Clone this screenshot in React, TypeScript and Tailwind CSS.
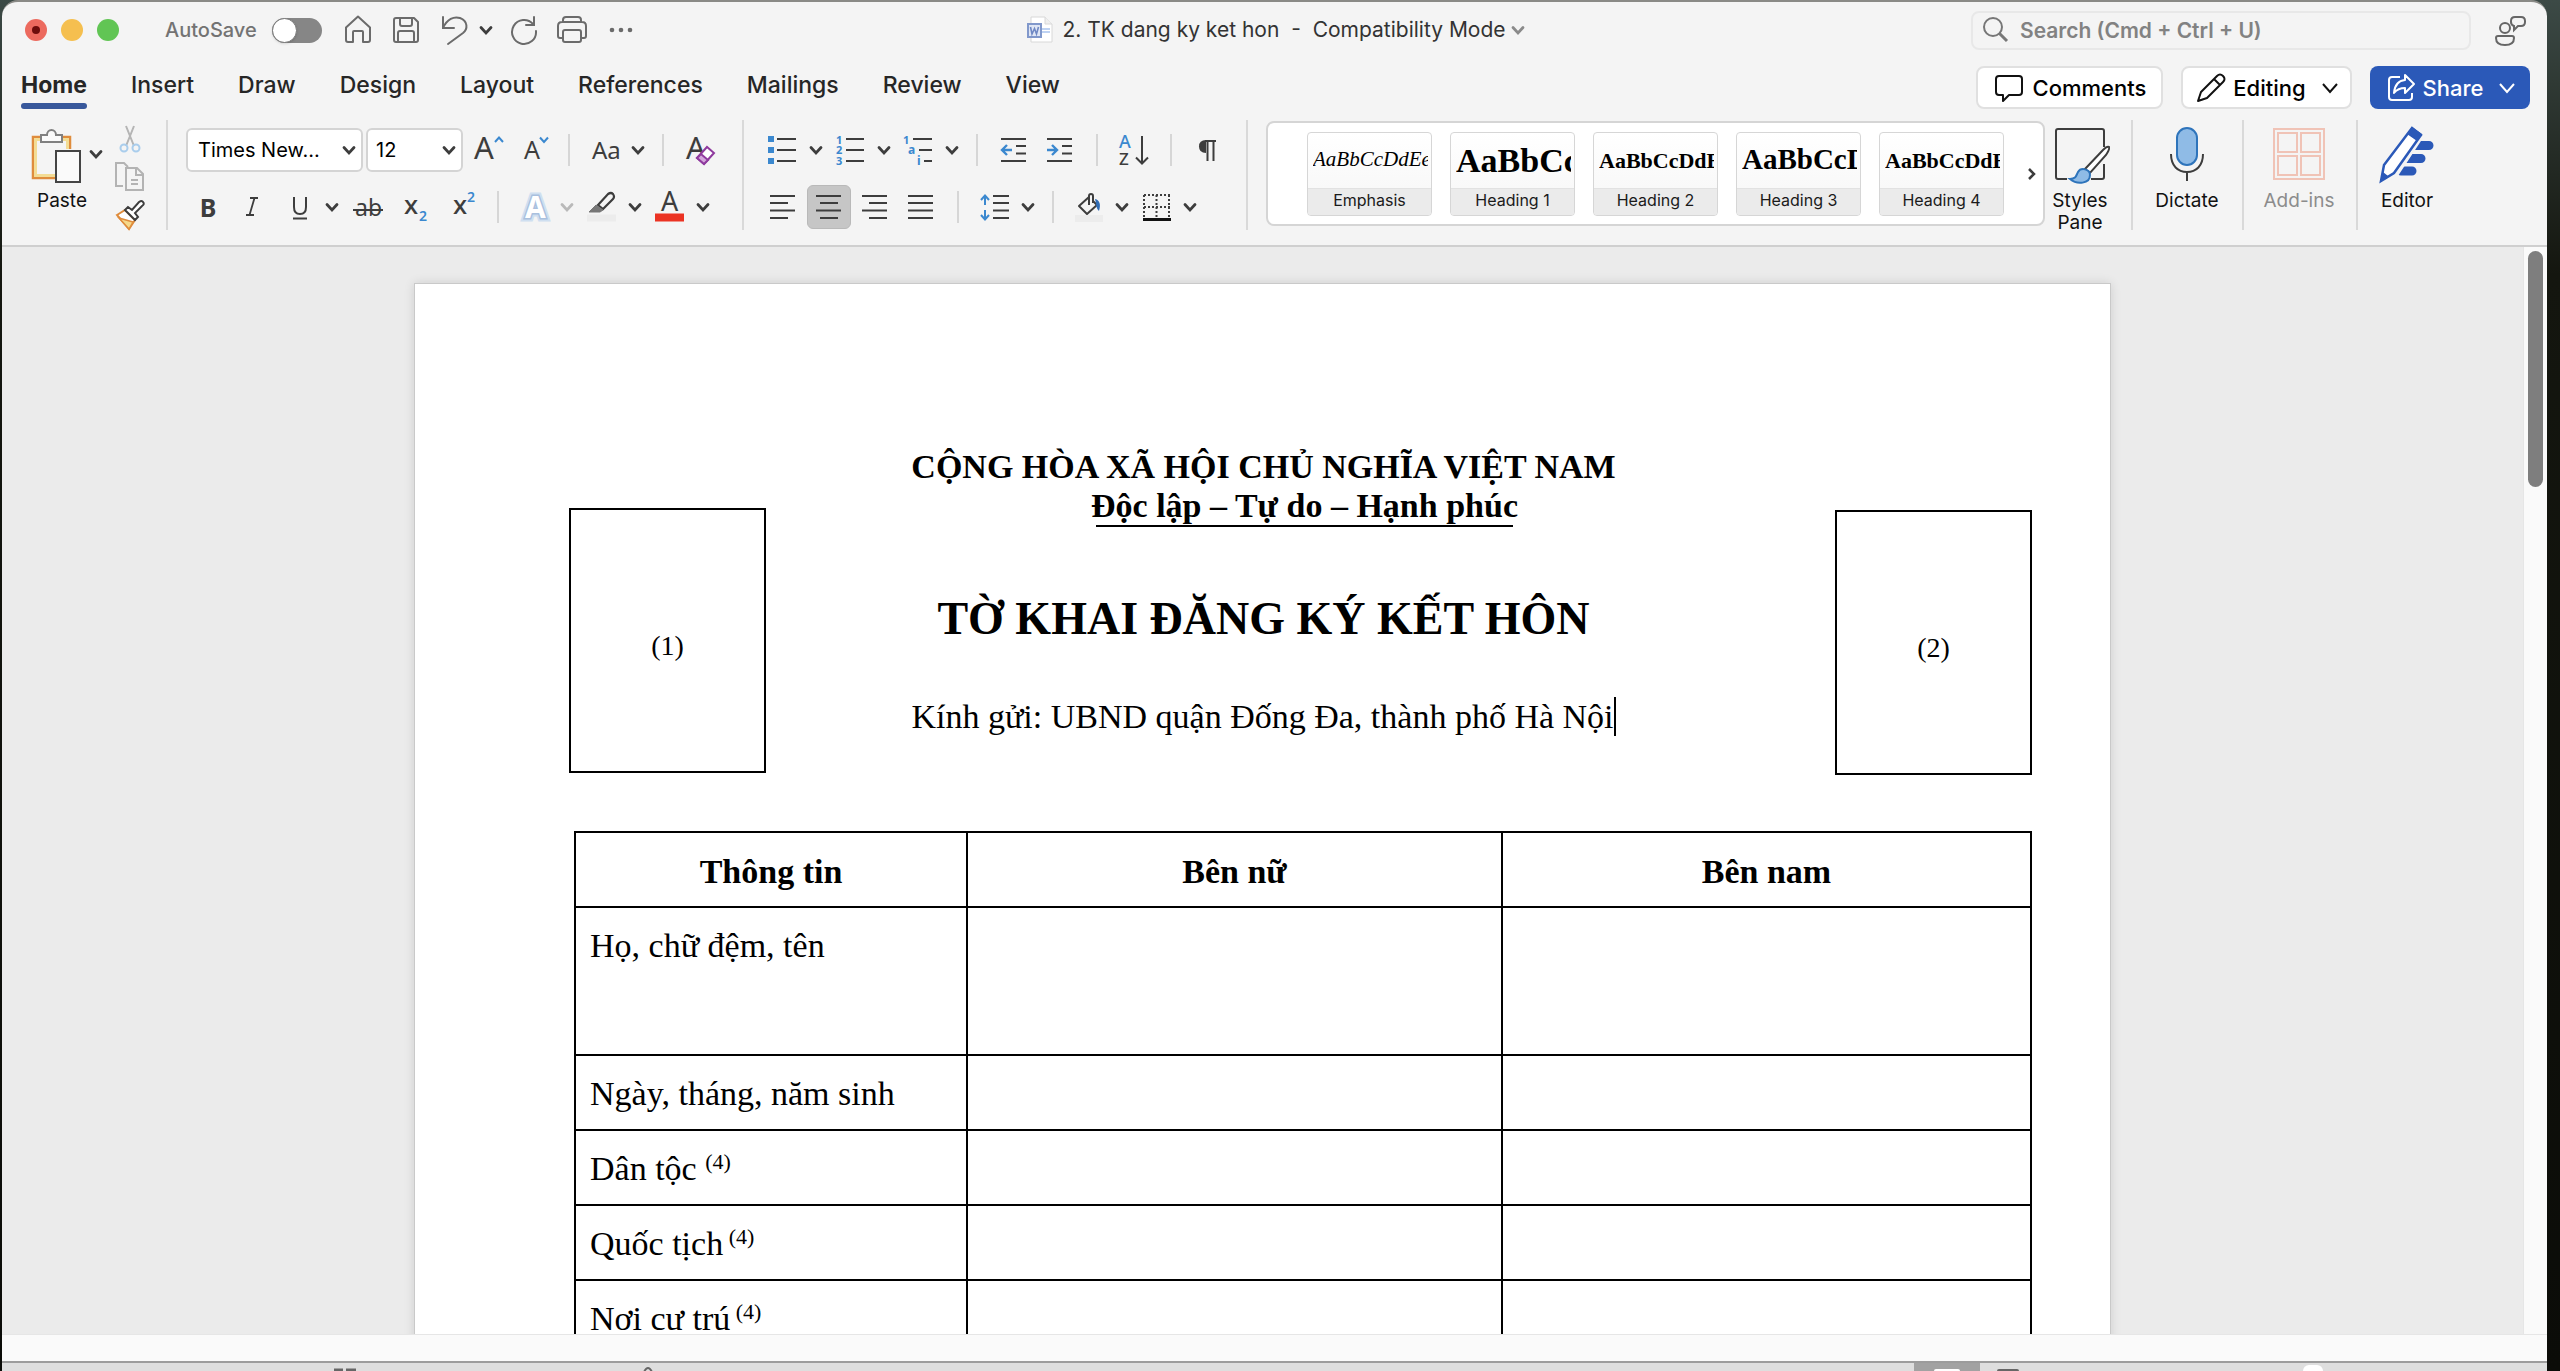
import type { ReactNode } from 'react'
import clsx from 'clsx'

const INK = '#3d3d3d'
const BLUE = '#3b88cf'

const tabs = ['Home', 'Insert', 'Draw', 'Design', 'Layout', 'References', 'Mailings', 'Review', 'View']

const styleCards = [
  { name: 'Emphasis', sample: 'AaBbCcDdEe', look: 'italic text-[21px]' },
  { name: 'Heading 1', sample: 'AaBbCc', look: 'font-bold text-[34px]' },
  { name: 'Heading 2', sample: 'AaBbCcDdEe', look: 'font-bold text-[22px]' },
  { name: 'Heading 3', sample: 'AaBbCcDd', look: 'font-bold text-[29px]' },
  { name: 'Heading 4', sample: 'AaBbCcDdEe', look: 'font-bold text-[22px]' },
]

const rows = [
  { label: 'Họ, chữ đệm, tên', tall: true },
  { label: 'Ngày, tháng, năm sinh' },
  { label: 'Dân tộc ', note: '(4)' },
  { label: 'Quốc tịch', note: '(4)' },
  { label: 'Nơi cư trú', note: '(4)' },
]

function Icon({ w = 32, h = 32, className, children }: { w?: number; h?: number; className?: string; children: ReactNode }) {
  return (
    <svg
      width={w}
      height={h}
      viewBox={`0 0 ${w} ${h}`}
      fill="none"
      stroke={INK}
      strokeWidth="2"
      aria-hidden="true"
      className={clsx('block shrink-0', className)}
    >
      {children}
    </svg>
  )
}

function Glyph({ x, y, size, color = INK, weight = 400, className, children }: { x: number; y: number; size: number; color?: string; weight?: number; className?: string; children: string }) {
  return (
    <text x={x} y={y} fontSize={size} fontWeight={weight} fill={color} stroke="none" className={clsx("font-['Noto_Sans',sans-serif]", className)}>
      {children}
    </text>
  )
}

function Tool({ label, className, children }: { label: string; className?: string; children: ReactNode }) {
  return (
    <button type="button" aria-label={label} className={clsx('flex h-11 shrink-0 items-center justify-center rounded-md', className)}>
      {children}
    </button>
  )
}

function Chevron({ color = INK, className }: { color?: string; className?: string }) {
  return (
    <Icon w={16} h={16} className={className}>
      <path d="M3 5.500l5 5.500 5-5.500" stroke={color} strokeWidth="2.800" strokeLinecap="round" />
    </Icon>
  )
}

function Separator({ className }: { className?: string }) {
  return <div className={clsx('h-8 w-0.5 shrink-0 bg-[#d6d6d6]', className)} />
}

function GroupLine({ className }: { className?: string }) {
  return <div className={clsx('h-[110px] w-0.5 shrink-0 bg-[#d9d9d9]', className)} />
}

function BigTool({ label, dimmed = false, className, children }: { label: string; dimmed?: boolean; className?: string; children: ReactNode }) {
  return (
    <button
      type="button"
      disabled={dimmed}
      className={clsx('flex shrink-0 flex-col items-center gap-1 pt-1.5 text-[19px] leading-[22px]', dimmed ? 'text-[#8c8c8c]' : 'text-[#111]', className)}
    >
      {children}
      <span>{label}</span>
    </button>
  )
}

function TitleBar() {
  return (
    <div className="flex h-14 items-center pl-[23px] pr-5">
      <div className="flex flex-1 items-center">
        <div className="flex gap-3.5">
          <button type="button" aria-label="Close" className="flex size-[22px] items-center justify-center rounded-full bg-[#ec6a5e]">
            <span className="size-2 rounded-full bg-[#6d0d0b]" />
          </button>
          <button type="button" aria-label="Minimise" className="size-[22px] rounded-full bg-[#f5bf4f]" />
          <button type="button" aria-label="Zoom" className="size-[22px] rounded-full bg-[#61c554]" />
        </div>
        <label htmlFor="autosave" className="ml-[46px] text-[20px] leading-6 font-medium text-[#737373]">AutoSave</label>
        <input
          id="autosave"
          type="checkbox"
          role="switch"
          className="ml-[15px] h-[25px] w-[50px] shrink-0 appearance-none rounded-full bg-[#868686] before:block before:size-[25px] before:rounded-full before:border before:border-[#777] before:bg-white before:shadow"
        />
        <button type="button" aria-label="Home" className="ml-5">
          <Icon>
            <g stroke="#6b6b6b">
              <path d="M4 13.500L16 2.500l12 11V26q0 2-2 2h-5V18q0-1-1-1h-8q-1 0-1 1v10H6q-2 0-2-2z" strokeLinejoin="round" />
            </g>
          </Icon>
        </button>
        <button type="button" aria-label="Save" className="ml-4">
          <Icon>
            <g stroke="#6b6b6b" strokeLinejoin="round">
              <path d="M4 6q0-2 2-2h18l4 4v18q0 2-2 2H6q-2 0-2-2zM10 4v6q0 2 2 2h8q2 0 2-2V4M8 28V19q0-2 2-2h12q2 0 2 2v9" />
            </g>
          </Icon>
        </button>
        <button type="button" aria-label="Undo" className="ml-4">
          <Icon>
            <g stroke="#6b6b6b" strokeLinecap="round">
              <path d="M5 3v11h11M5 14C9 5 16 2 22 4c8 3 8 11 3 15L10 30" />
            </g>
          </Icon>
        </button>
        <button type="button" aria-label="Undo history" className="ml-2">
          <Chevron />
        </button>
        <button type="button" aria-label="Redo" className="ml-[14px]">
          <Icon>
            <g stroke="#6b6b6b" strokeLinecap="round">
              <path d="M26 3v8h-8M25 10A12 12 0 1 0 28 17" />
            </g>
          </Icon>
        </button>
        <button type="button" aria-label="Print" className="ml-4">
          <Icon>
            <g stroke="#6b6b6b" strokeLinejoin="round">
              <path d="M7 8V6q0-3 3-3h12q3 0 3 3v2M7 24H4q-2 0-2-2V12q0-4 4-4h20q4 0 4 4v10q0 2-2 2h-3M9 16h14q2 0 2 2v8q0 2-2 2H9q-2 0-2-2v-8q0-2 2-2z" />
            </g>
          </Icon>
        </button>
        <button type="button" aria-label="More" className="ml-4">
          <Icon>
            <g fill="#6b6b6b" stroke="none">
              <circle cx="8" cy="16" r="2.300" />
              <circle cx="17" cy="16" r="2.300" />
              <circle cx="26" cy="16" r="2.300" />
            </g>
          </Icon>
        </button>
      </div>

      <button type="button" className="flex items-center text-[21px] leading-6 whitespace-pre text-[#333]">
        <Icon w={28} h={30} className="mr-2">
          <path d="M5 2h14l7 7v18H5z" fill="#fff" stroke="#d8d8d8" strokeWidth="1" />
          <path d="M19 2v7h7" fill="#efefef" stroke="#d8d8d8" strokeWidth="1" />
          <path d="M16 14h8M16 17h8" stroke="#a9c3ee" strokeWidth="1.500" />
          <rect x="2" y="9" width="13" height="13" fill="#dfe6f5" stroke="#8198cb" />
          <path d="M4.500 12l1.500 7 2.500-5.500L10.500 19l2-7" stroke="#6f88c4" strokeWidth="1.600" />
        </Icon>
        2. TK dang ky ket hon  -  Compatibility Mode
        <Chevron color="#8a8a8a" className="ml-1" />
      </button>

      <div className="flex flex-1 items-center justify-end">
        <label className="flex h-[39px] w-[500px] items-center rounded-lg border-2 border-[#e8e8e8] bg-[#f4f4f4] pl-2">
          <Icon>
            <g stroke="#777">
              <circle cx="12" cy="13" r="9" />
              <path d="M18.500 19.500L26 27" strokeWidth="3" />
            </g>
          </Icon>
          <input
            type="text"
            aria-label="Search"
            placeholder="Search (Cmd + Ctrl + U)"
            className="ml-[7px] h-8 min-w-0 flex-1 bg-transparent text-[21px] leading-7 font-semibold outline-none placeholder:text-[#828282]"
          />
        </label>
        <button type="button" aria-label="Presence" className="ml-5">
          <Icon w={36} h={34}>
            <g stroke="#666">
              <circle cx="14" cy="15" r="5" />
              <path d="M24 4h6q4 0 4 4v1q0 4-4 4h-3l-4 4v-4q-3-1-3-4V8q0-4 4-4zM5 25q0-2 2-2h14q2 0 2 2c0 5-4 7-9 7s-9-2-9-7z" />
            </g>
          </Icon>
        </button>
      </div>
    </div>
  )
}

function TabRow() {
  return (
    <div className="flex items-start justify-between pt-2 pl-[19px] pr-[17px]">
      <nav className="flex gap-11 text-[23px] leading-7 font-medium text-[#262626]">
        {tabs.map((tab) => (
          <button type="button" key={tab} className={clsx('flex h-[43px] flex-col gap-1 pt-[5px]', tab === 'Home' && 'font-bold')}>
            <span>{tab}</span>
            {tab === 'Home' && <span className="h-1.5 w-full rounded-full bg-[#38589b]" />}
          </button>
        ))}
      </nav>
      <div className="flex text-[22px] leading-7 font-medium text-black">
        <button type="button" className="flex h-[43px] w-[187px] items-center justify-center rounded-lg border-2 border-[#e0e0e0] bg-white">
          <Icon>
            <path d="M6 4h20q3 0 3 3v13q0 3-3 3H16l-6 6v-6H6q-3 0-3-3V7q0-3 3-3z" stroke="#111" strokeLinejoin="round" />
          </Icon>
          <span className="ml-2">Comments</span>
        </button>
        <button type="button" className="ml-[18px] flex h-[43px] w-[171px] items-center justify-center rounded-lg border-2 border-[#e0e0e0] bg-white">
          <Icon>
            <path d="M3 29l3-9L22 4q3-3 6 0 3 3 0 6L12 26zM19 7l6 6" stroke="#111" strokeLinejoin="round" />
          </Icon>
          <span className="ml-1.5">Editing</span>
          <Icon w={16} h={16} className="ml-4">
            <path d="M1 4l7 8 7-8" stroke="#111" />
          </Icon>
        </button>
        <button type="button" className="ml-[18px] flex h-[43px] w-[160px] items-center justify-center rounded-lg bg-[#2b59b8] text-white">
          <Icon>
            <g stroke="#fff" strokeLinejoin="round">
              <path d="M15 5H7q-3 0-3 3v17q0 3 3 3h17q3 0 3-3v-4" />
              <path d="M20 3l9 9-9 9v-5q-7 0-11 5 1-12 11-13z" />
            </g>
          </Icon>
          <span className="ml-1.5">Share</span>
          <Icon w={16} h={16} className="ml-4">
            <path d="M1 4l7 8 7-8" stroke="#fff" />
          </Icon>
        </button>
      </div>
    </div>
  )
}

function ClipboardGroup() {
  return (
    <div className="flex shrink-0">
      <BigTool label="Paste" className="w-14">
        <Icon w={54} h={60} className="-ml-1 self-start">
          <path d="M10 11H3v41h24M33 11h7v12" stroke="#df8c3c" strokeWidth="2.500" />
          <path d="M10 13.500H5.500v36H25M33 13.500h4.500V23" stroke="#f3dc94" strokeWidth="3" />
          <path d="M11 16V9h6c0-3 2-5 4.500-5S26 6 26 9h6v7z" fill="#fafafa" stroke="#808080" />
          <rect x="26" y="25" width="24" height="31" fill="#fafafa" stroke="#444" />
        </Icon>
      </BigTool>
      <Tool label="Paste options" className="mt-3 w-3">
        <Chevron />
      </Tool>
      <div className="ml-3 flex flex-col">
        <button type="button" aria-label="Cut" className="flex h-[38px] items-center">
          <Icon>
            <path d="M12 3l8 20M20 3l-8 20" stroke="#b5b5b5" />
            <circle cx="10" cy="25" r="3.500" stroke="#a9cdec" />
            <circle cx="22" cy="25" r="3.500" stroke="#a9cdec" />
          </Icon>
        </button>
        <button type="button" aria-label="Copy" className="flex h-[38px] items-center">
          <Icon>
            <g stroke="#b3b3b3">
              <path d="M9 25H2V2h8l4 4M12 7h11l6 6v16H12zM22 7v7h7M17 19h7M17 23h7" />
            </g>
          </Icon>
        </button>
        <button type="button" aria-label="Format painter" className="flex h-[38px] items-center">
          <Icon>
            <path d="M3 16l8-5 10 10-6 9z" fill="#fff" stroke="#df8c3c" />
            <path d="M5 19l14 4-4 7z" fill="#f5d98b" stroke="#df8c3c" strokeWidth="1.500" />
            <path d="M11 11l3-3 4 3 7-8q3-2 4 0 2 2-1 4l-7 7 3 4-3 3z" fill="#fff" />
          </Icon>
        </button>
      </div>
    </div>
  )
}

function FontGroup() {
  return (
    <div className="ml-[18px] flex shrink-0 flex-col gap-[13px] pt-2">
      <div className="flex items-center">
        <div className="relative">
          <select aria-label="Font" className="h-11 w-[177px] appearance-none rounded-md border-2 border-[#d4d4d4] bg-white pl-2.5 text-[20px] text-black">
            <option>Times New...</option>
          </select>
          <Chevron className="pointer-events-none absolute top-3.5 right-1.5" />
        </div>
        <div className="relative ml-[3px]">
          <select aria-label="Font size" className="h-11 w-[97px] appearance-none rounded-md border-2 border-[#d4d4d4] bg-white pl-2 text-[20px] text-black">
            <option>12</option>
          </select>
          <Chevron className="pointer-events-none absolute top-3.5 right-1.5" />
        </div>
        <Tool label="Grow font" className="ml-[9px] w-8">
          <Icon>
            <Glyph x={2} y={25} size={31}>A</Glyph>
            <path d="M23 8l4-4.500 4 4.500" stroke={BLUE} />
          </Icon>
        </Tool>
        <Tool label="Shrink font" className="ml-4 w-8">
          <Icon>
            <Glyph x={4} y={25} size={25}>A</Glyph>
            <path d="M20 3.500l4 4.500 4-4.500" stroke={BLUE} />
          </Icon>
        </Tool>
        <Separator className="ml-4" />
        <Tool label="Change case" className="ml-5 w-8">
          <Icon>
            <Glyph x={2} y={25} size={24}>Aa</Glyph>
          </Icon>
        </Tool>
        <Chevron className="ml-2" />
        <Separator className="ml-4" />
        <Tool label="Clear formatting" className="ml-5 w-8">
          <Icon>
            <Glyph x={2} y={25} size={31}>A</Glyph>
            <path d="M13 24L23 13l7 6-10 11z" fill="#fff" stroke="#8f3a9e" />
            <path d="M13 24l4-4 7 6-4 4z" fill="#d3a5db" stroke="#8f3a9e" />
          </Icon>
        </Tool>
      </div>
      <div className="flex items-center">
        <Tool label="Bold" className="ml-1.5 w-8 font-['Noto_Sans',sans-serif] text-[25px] leading-8 font-bold text-[#3d3d3d]">B</Tool>
        <Tool label="Italic" className="ml-[13px] w-8">
          <Icon>
            <path d="M13 7h8M9 24h8M17.500 7l-5 17" strokeWidth="1.800" />
          </Icon>
        </Tool>
        <Tool label="Underline" className="ml-[15px] w-8">
          <Icon>
            <path d="M10 6v10q0 7 6 7t6-7V6M9 27.500h14" />
          </Icon>
        </Tool>
        <Chevron className="ml-2" />
        <Tool label="Strikethrough" className="ml-3 w-8">
          <Icon>
            <Glyph x={3} y={25} size={23}>ab</Glyph>
            <path d="M1 19h30" />
          </Icon>
        </Tool>
        <Tool label="Subscript" className="ml-[18px] w-8">
          <Icon>
            <Glyph x={2} y={23} size={26} weight={500}>x</Glyph>
            <Glyph x={17} y={30} size={14} color={BLUE} weight={600}>2</Glyph>
          </Icon>
        </Tool>
        <Tool label="Superscript" className="ml-[15px] w-8">
          <Icon>
            <Glyph x={4} y={23} size={26} weight={500}>x</Glyph>
            <Glyph x={18} y={11} size={14} color={BLUE} weight={600}>2</Glyph>
          </Icon>
        </Tool>
        <Separator className="ml-4" />
        <Tool label="Text effects" className="ml-5 w-8">
          <Icon>
            <text x="6" y="27" fontSize="30" fontWeight="700" fill="#fff" stroke="#cfdff0" strokeWidth="7" className="font-['Noto_Sans',sans-serif]">A</text>
            <text x="6" y="27" fontSize="30" fontWeight="700" fill="#fff" stroke="#a9c0de" strokeWidth="3" className="font-['Noto_Sans',sans-serif]">A</text>
            <text x="6" y="27" fontSize="30" fontWeight="700" fill="#fff" stroke="none" className="font-['Noto_Sans',sans-serif]">A</text>
          </Icon>
        </Tool>
        <Chevron color="#b9b9b9" className="ml-2" />
        <Tool label="Highlight" className="ml-[11px] w-8">
          <Icon>
            <path d="M12 14L22 3q3-2 5 0 2 3 0 5L17 18z" strokeWidth="2.200" />
            <path d="M3 21l7-7 7 5-3 2z" fill="#777" stroke="#777" strokeWidth="1" />
            <path d="M1 27h29" stroke="#ececec" strokeWidth="7" />
          </Icon>
        </Tool>
        <Chevron className="ml-[9px]" />
        <Tool label="Font colour" className="ml-[11px] w-8">
          <Icon>
            <Glyph x={7} y={20} size={27}>A</Glyph>
            <path d="M1 26.500h29" stroke="#eb3323" strokeWidth="8" />
          </Icon>
        </Tool>
        <Chevron className="ml-[9px]" />
      </div>
    </div>
  )
}

function ParagraphGroup() {
  return (
    <div className="ml-[22px] flex shrink-0 flex-col gap-[13px] pt-2">
      <div className="flex items-center">
        <Tool label="Bullets" className="w-8">
          <Icon>
            <path d="M2 5h6M2 16h6M2 27h6" stroke={BLUE} strokeWidth="6" />
            <path d="M11 5h19M11 16h19M11 27h19" />
          </Icon>
        </Tool>
        <Chevron className="ml-2.5" />
        <Tool label="Numbering" className="ml-2.5 w-8">
          <Icon>
            <Glyph x={2} y={10} size={11} color={BLUE} weight={700}>1</Glyph>
            <Glyph x={2} y={20} size={11} color={BLUE} weight={700}>2</Glyph>
            <Glyph x={2} y={31} size={11} color={BLUE} weight={700}>3</Glyph>
            <path d="M12 5h18M12 16h18M12 27h18" />
          </Icon>
        </Tool>
        <Chevron className="ml-2.5" />
        <Tool label="Multilevel list" className="ml-2.5 w-8">
          <Icon>
            <Glyph x={1} y={10} size={11} color={BLUE} weight={700}>1</Glyph>
            <Glyph x={6} y={20} size={12} color={BLUE} weight={700}>a</Glyph>
            <Glyph x={15} y={31} size={12} color={BLUE} weight={700}>i</Glyph>
            <path d="M11 5h19M17 16h13M22 27h8" />
          </Icon>
        </Tool>
        <Chevron className="ml-2.5" />
        <Separator className="ml-4" />
        <Tool label="Decrease indent" className="ml-5 w-8">
          <Icon>
            <path d="M3 5h25M18 12h10M18 19.500h10M3 27h25" />
            <path d="M14 16H5M9 11l-5 5 5 5" stroke={BLUE} strokeWidth="2.400" />
          </Icon>
        </Tool>
        <Tool label="Increase indent" className="ml-[14px] w-8">
          <Icon>
            <path d="M3 5h25M18 12h10M18 19.500h10M3 27h25" />
            <path d="M3 16h9M8 11l5 5-5 5" stroke={BLUE} strokeWidth="2.400" />
          </Icon>
        </Tool>
        <Separator className="ml-5" />
        <Tool label="Sort" className="ml-5 w-8">
          <Icon>
            <Glyph x={1} y={14} size={18} color={BLUE} weight={500}>A</Glyph>
            <Glyph x={1} y={31} size={17} weight={500}>Z</Glyph>
            <path d="M24 2v27M18 23.500l6 6 6-6" />
          </Icon>
        </Tool>
        <Separator className="ml-5" />
        <Tool label="Show marks" className="ml-5 w-8">
          <Icon>
            <path d="M24 7H13M15.500 7v20M21.500 7v20" />
            <path d="M14 6v13q-7 0-7-6.500T14 6z" fill={INK} stroke="none" />
          </Icon>
        </Tool>
      </div>
      <div className="flex items-center">
        <Tool label="Align left" className="ml-px w-8">
          <Icon>
            <path d="M3 5h25M3 12h18M3 19.500h25M3 27h18" />
          </Icon>
        </Tool>
        <Tool label="Centre" className="ml-2 w-11 border border-[#b9b9b9] bg-[#c6c6c6]">
          <Icon>
            <path d="M3 5h25M7 12h18M3 19.500h25M7 27h18" />
          </Icon>
        </Tool>
        <Tool label="Align right" className="ml-2 w-8">
          <Icon>
            <path d="M3 5h25M10 12h18M3 19.500h25M10 27h18" />
          </Icon>
        </Tool>
        <Tool label="Justify" className="ml-[14px] w-8">
          <Icon>
            <path d="M3 5h25M3 12h25M3 19.500h25M3 27h25" />
          </Icon>
        </Tool>
        <Separator className="ml-5" />
        <Tool label="Line spacing" className="ml-5 w-8">
          <Icon>
            <path d="M14 5h16M14 12h16M14 19.500h16M14 27h16" />
            <path d="M6 14V5M2 9l4-4.500L10 9M6 19v9M2 24l4 4.500 4-4.500" stroke={BLUE} />
          </Icon>
        </Tool>
        <Chevron className="ml-[9px]" />
        <Separator className="ml-4" />
        <Tool label="Shading" className="ml-5 w-8">
          <Icon>
            <path d="M15 6L5 15l8 8 10-9-4-4M15 14V5q0-2 2-2t2 2v7" strokeLinejoin="round" />
            <path d="M21 8c5 1 6 6 4 12q-3-3-3-8z" fill="#2f6cb5" stroke="none" />
            <path d="M1 27.500h28" stroke="#ececec" strokeWidth="7" />
          </Icon>
        </Tool>
        <Chevron className="ml-2" />
        <Tool label="Borders" className="ml-[11px] w-8">
          <Icon>
            <path d="M3 4h26M3 4v22M28 4v22M3 16h26M15.500 4v22" strokeDasharray="2 2" />
            <path d="M2 28.500h28" stroke="#111" strokeWidth="3" />
          </Icon>
        </Tool>
        <Chevron className="ml-[9px]" />
      </div>
    </div>
  )
}

function StylesGallery() {
  return (
    <div className="mt-px ml-[18px] flex h-[105px] w-[779px] shrink-0 items-center rounded-lg border-2 border-[#d5d5d5] bg-white pl-[39px]">
      <div className="flex gap-[18px]">
        {styleCards.map((card) => (
          <button
            type="button"
            key={card.name}
            className="flex h-[84px] w-[125px] flex-col overflow-hidden rounded border border-[#d6d6d6] bg-gradient-to-b from-white to-[#f6f6f6]"
          >
            <span className={clsx("mx-[5px] flex h-[55px] w-[115px] items-center overflow-hidden font-['Liberation_Serif',serif] whitespace-nowrap text-black", card.look)}>
              {card.sample}
            </span>
            <span className="flex w-full flex-1 items-center justify-center border-t border-[#e2e2e2] bg-[#ebebeb] pb-1 text-[16px] leading-5 text-[#1a1a1a]">{card.name}</span>
          </button>
        ))}
      </div>
      <button type="button" aria-label="More styles" className="ml-4">
        <Icon w={16} h={16} className="ml-1">
          <path d="M5 3l5 5-5 5" strokeWidth="2.500" />
        </Icon>
      </button>
    </div>
  )
}

function Ribbon() {
  return (
    <div className="flex items-start pt-[11px] pb-[11px] pl-8">
      <ClipboardGroup />
      <GroupLine className="ml-5" />
      <FontGroup />
      <GroupLine className="ml-[26px]" />
      <ParagraphGroup />
      <GroupLine className="ml-[22px]" />
      <StylesGallery />
      <BigTool label="Styles Pane" className="ml-[5px] w-[60px]">
        <Icon w={60} h={60}>
          <path d="M54 21V5q0-2-2-2H8Q6 3 6 5v46q0 2 2 2h9M41 53h11q2 0 2-2V38" />
          <path d="M35 43L53 24q4-4 6-3 1 2-3 8L40 47z" fill="#fff" />
          <path d="M20 53c6 0 6-3 8-7 3-5 12-3 12 3 0 9-13 10-20 4z" fill="#8fbbe6" stroke="#2e74bb" />
        </Icon>
      </BigTool>
      <GroupLine className="ml-[21px]" />
      <BigTool label="Dictate" className="ml-5 w-[68px]">
        <Icon w={62} h={60}>
          <rect x="21" y="2" width="20" height="37" rx="10" fill="#8fbbe6" stroke="#2e74bb" />
          <path d="M15 28c0 12 7 18 16 18s16-6 16-18M31 46v9" />
        </Icon>
      </BigTool>
      <GroupLine className="ml-[21px]" />
      <BigTool label="Add-ins" dimmed className="ml-[19px] w-[72px]">
        <Icon w={64} h={60}>
          <g stroke="#f0c3b6">
            <rect x="7" y="3" width="50" height="50" />
            <rect x="11" y="7" width="19" height="19" />
            <rect x="34" y="7" width="19" height="19" />
            <rect x="11" y="30" width="19" height="19" />
            <rect x="34" y="30" width="19" height="19" />
          </g>
        </Icon>
      </BigTool>
      <GroupLine className="ml-[21px]" />
      <BigTool label="Editor" className="ml-[19px] w-[60px]">
        <Icon w={60} h={60}>
          <path d="M36 19.500h16M30 32.500h14M24 45h11" stroke="#2b59b8" strokeWidth="9" strokeLinecap="round" />
          <path d="M35 2l10 6-27 41-14 6 3-15z" fill="#fff" stroke="#f4f4f4" strokeWidth="6" />
          <path d="M35 2l9 7-27 38-13 8 3-16z" fill="#fff" stroke="#2b59b8" strokeWidth="2.500" />
          <path d="M35 1l10 7-5 7-10-7zM4 55l2-9 5 4z" fill="#2b59b8" stroke="none" />
        </Icon>
      </BigTool>
    </div>
  )
}

function PhotoBox({ label, className }: { label: string; className?: string }) {
  return (
    <div className={clsx('flex h-[265px] w-[197px] shrink-0 items-center justify-center border-2 border-black pt-2.5 text-[28px] leading-8', className)}>
      {label}
    </div>
  )
}

function DocumentPage() {
  return (
    <article className="mx-auto w-full max-w-[1697px] border border-[#c9c9c9] bg-white pt-[163px] pr-[78px] pl-[154px] font-['Liberation_Serif',serif] text-[34px] leading-[39px] text-black shadow-[0_0_10px_rgba(0,0,0,0.12)]">
      <header className="flex items-start">
        <PhotoBox label="(1)" className="mt-[61px]" />
        <div className="flex flex-1 flex-col items-center pr-[74px] text-center">
          <p className="font-bold">CỘNG HÒA XÃ HỘI CHỦ NGHĨA VIỆT NAM</p>
          <p className="ml-[82px] flex flex-col items-center font-bold">
            Độc lập – Tự do – Hạnh phúc
            <span className="h-0.5 w-[417px] bg-black" />
          </p>
          <h1 className="mt-16 text-[46px] leading-[56px] font-bold">TỜ KHAI ĐĂNG KÝ KẾT HÔN</h1>
          <p className="mt-[50px] flex">
            Kính gửi: UBND quận Đống Đa, thành phố Hà Nội
            <span className="w-0.5 bg-black" />
          </p>
        </div>
        <PhotoBox label="(2)" className="mt-[63px]" />
      </header>

      <table className="mt-14 ml-[5px] w-[calc(100%-5px)] table-fixed border-collapse leading-10">
        <colgroup>
          <col className="w-[392px]" />
          <col className="w-[535px]" />
          <col />
        </colgroup>
        <thead>
          <tr className="h-[75px]">
            {['Thông tin', 'Bên nữ', 'Bên nam'].map((title) => (
              <th key={title} scope="col" className="border-2 border-black pt-[18px] pb-3.5 font-bold">{title}</th>
            ))}
          </tr>
        </thead>
        <tbody>
          {rows.map((row) => (
            <tr key={row.label} className={row.tall ? 'h-[148px]' : 'h-[75px]'}>
              <th scope="row" className="border-2 border-black px-3.5 pt-[18px] pb-3.5 text-left align-top font-normal">
                {row.label}
                {row.note && <sup className="text-[22px]"> {row.note}</sup>}
              </th>
              <td className="border-2 border-black" />
              <td className="border-2 border-black" />
            </tr>
          ))}
        </tbody>
      </table>
    </article>
  )
}

function StatusBar() {
  return (
    <footer className="flex h-2.5 shrink-0 items-end justify-between overflow-hidden border-t-2 border-[#9c9c9c] bg-[#dedede] pr-[224px] pl-[331px]">
      <div className="flex items-end gap-[286px]">
        <Icon w={24} h={3}>
          <path d="M1 2h9M13 2h10" stroke="#666" strokeWidth="3" />
        </Icon>
        <Icon w={10} h={4}>
          <path d="M1 5q4-8 8 0" stroke="#666" />
        </Icon>
      </div>
      <div className="flex items-end">
        <button type="button" aria-label="Print layout" className="flex h-2 w-[66px] items-end justify-center bg-[#a2a2a2]">
          <span className="h-0.5 w-[26px] rounded-t bg-white" />
        </button>
        <span className="ml-[17px] h-0.5 w-[22px] rounded-t bg-[#666]" />
        <span className="ml-[284px] h-1.5 w-5 rounded-t-full bg-white" />
      </div>
    </footer>
  )
}

export default function App() {
  return (
    <div className="h-screen overflow-hidden bg-gradient-to-b from-[#3c4a46] via-[#14160f] via-20% to-[#0b0c08] pr-[13px] pl-0.5 font-['Inter',sans-serif]">
      <div className="flex h-full flex-col overflow-hidden rounded-t-2xl border-t-2 border-[#8a8a86] bg-[#f4f4f4]">
        <div className="shrink-0 border-b-2 border-[#cfcfcf]">
          <TitleBar />
          <TabRow />
          <Ribbon />
        </div>
        <div className="flex min-h-0 flex-1">
          <main className="min-w-0 flex-1 overflow-hidden bg-[#ebebeb] pt-9">
            <DocumentPage />
          </main>
          <div className="w-6 shrink-0 border-l border-[#e6e6e6] bg-[#fafafa] pt-1 pl-1">
            <div className="h-[236px] w-[15px] rounded-full bg-[#7e7e7e]" />
          </div>
        </div>
        <div className="h-[27px] shrink-0 border-t border-[#e6e6e6] bg-[#fafafa]" />
        <StatusBar />
      </div>
    </div>
  )
}
